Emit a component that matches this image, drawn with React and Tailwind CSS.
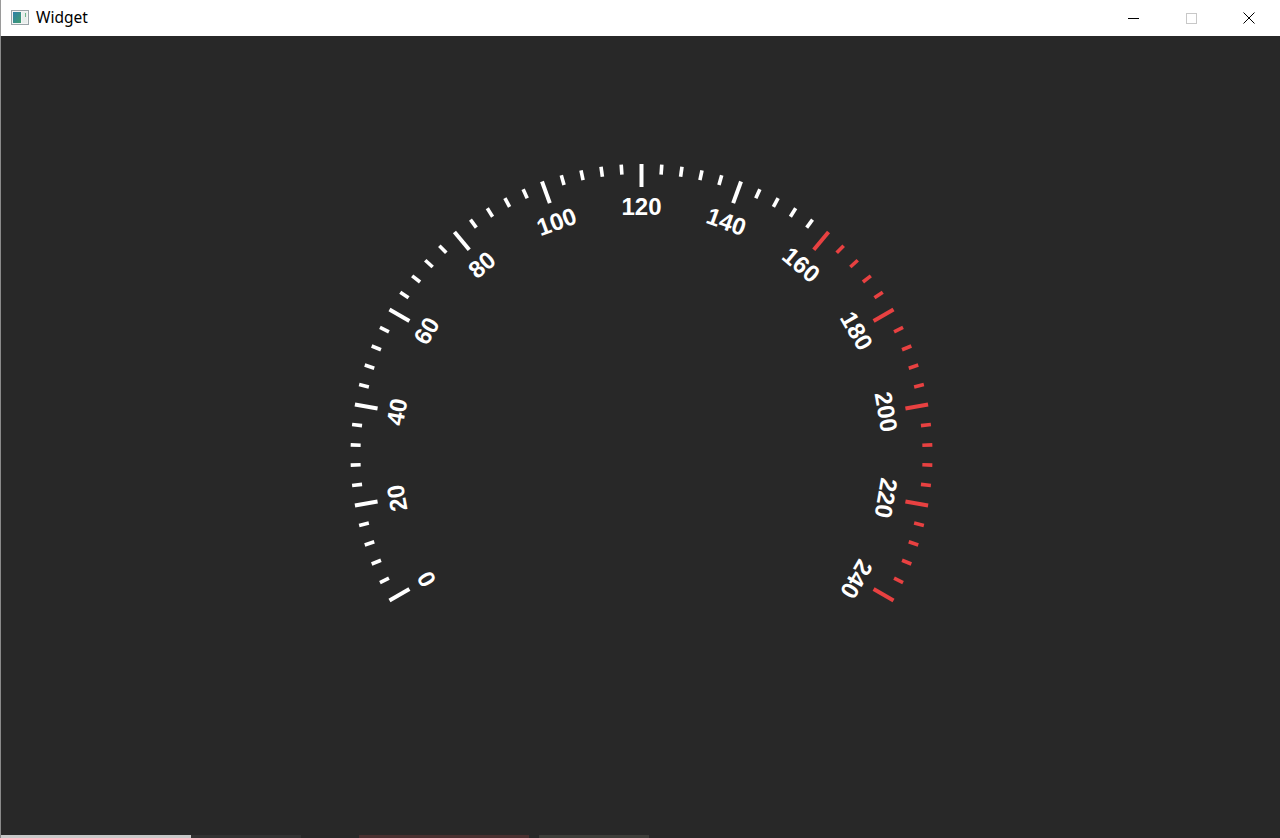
import React from "react";

const CX = 640.5;
const CY = 419;
const R_OUT = 291;

function Gauge() {
  const ticks = [];
  const labels = [];
  for (let v = 0; v <= 240; v += 4) {
    const major = v % 20 === 0;
    const th = ((v - 120) * Math.PI) / 180;
    const s = Math.sin(th);
    const c = Math.cos(th);
    const rIn = major ? 268 : 281;
    const color = v >= 160 ? "#e84141" : "#ffffff";
    ticks.push(
      <line
        key={"t" + v}
        x1={CX + rIn * s}
        y1={CY - rIn * c}
        x2={CX + R_OUT * s}
        y2={CY - R_OUT * c}
        stroke={color}
        strokeWidth={major ? 4 : 3.6}
      />
    );
    if (major) {
      const rl = 248.5;
      const x = CX + rl * s;
      const y = CY - rl * c;
      labels.push(
        <text
          key={"l" + v}
          x={x}
          y={y}
          transform={`rotate(${v - 120} ${x} ${y})`}
          textAnchor="middle"
          dominantBaseline="central"
          fill="#ffffff"
          fontFamily="'Liberation Sans', Arial, sans-serif"
          fontWeight="bold"
          fontSize="24"
        >
          {v}
        </text>
      );
    }
  }
  return (
    <svg width="1279" height="799" viewBox="0 0 1279 799" className="block">
      {ticks}
      {labels}
    </svg>
  );
}

export default function App() {
  return (
    <div className="w-[1280px] h-[838px] flex flex-col overflow-hidden bg-white">
      <div className="h-[36px] flex items-center bg-white border-l border-[#9a9a9a] shrink-0">
        <svg width="18" height="15" viewBox="0 0 18 15" className="ml-[10px] mt-[-2px]">
          <defs>
            <linearGradient id="g1" x1="0" y1="0" x2="1" y2="1">
              <stop offset="0" stopColor="#2d7fa8" />
              <stop offset="1" stopColor="#3f9d6e" />
            </linearGradient>
          </defs>
          <rect x="0.5" y="0.5" width="17" height="14" fill="#f4f4f4" stroke="#9aa4a8" />
          <rect x="2" y="2" width="8" height="11" fill="url(#g1)" />
          <rect x="11" y="2" width="5" height="11" fill="#e8eeec" />
          <rect x="14" y="3" width="1" height="4" fill="#6fb58a" />
        </svg>
        <span
          className="ml-[7px] text-[15.5px] text-black leading-none"
          style={{ fontFamily: "'Noto Sans', 'Liberation Sans', sans-serif" }}
        >
          Widget
        </span>
        <div className="ml-auto flex items-center h-full">
          <div className="w-[58px] h-full flex items-center justify-center">
            <div className="w-[11px] h-px bg-black" />
          </div>
          <div className="w-[58px] h-full flex items-center justify-center">
            <div className="w-[11px] h-[11px] border border-[#c8c8c8]" />
          </div>
          <div className="w-[58px] h-full flex items-center justify-center mr-[2px]">
            <svg width="12" height="12" viewBox="0 0 12 12">
              <path d="M0.5 0.5 L11.5 11.5 M11.5 0.5 L0.5 11.5" stroke="#000" strokeWidth="1" />
            </svg>
          </div>
        </div>
      </div>
      <div className="flex-1 flex flex-col bg-[#282828] border-l border-[#8a8a8a]">
        <div className="flex-1">
          <Gauge />
        </div>
        <div className="h-[3px] flex shrink-0">
          <div className="w-[190px] bg-[#c9c9c9]" />
          <div className="w-[110px] bg-[#333333]" />
          <div className="w-[58px]" />
          <div className="w-[170px] bg-[#4a3030]" />
          <div className="w-[10px]" />
          <div className="w-[110px] bg-[#3e3e3a]" />
        </div>
      </div>
    </div>
  );
}
